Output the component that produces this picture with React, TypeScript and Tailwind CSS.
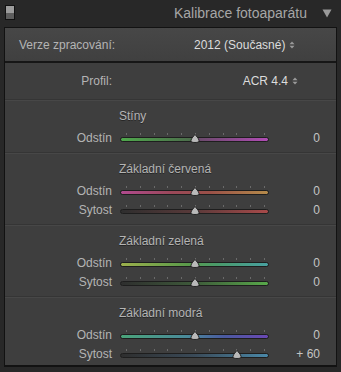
import React from "react";

type SliderProps = {
  label: string;
  value: number;
  gradient: string;
};

const ticks = [0, 1, 2, 3, 4, 5, 6, 7, 8, 9, 10];

const Thumb = () => (
  <svg width="10" height="9" viewBox="0 0 10 9" className="block">
    <path
      d="M5 0.5 C5.6 1.5 9 4.5 9 6.5 C9 8 8 8.5 5 8.5 C2 8.5 1 8 1 6.5 C1 4.5 4.4 1.5 5 0.5 Z"
      fill="#b9b9b9"
      stroke="#1c1c1c"
      strokeWidth="0.9"
    />
  </svg>
);

const SliderRow = ({ label, value, gradient }: SliderProps) => {
  const pct = (value + 100) / 200;
  const text = value > 0 ? `+ ${value}` : `${value}`;
  return (
    <div className="flex items-center h-[19px]">
      <span className="w-[107px] text-right text-[12px] text-[#b4b4b4]">{label}</span>
      <div className="relative ml-[8px] w-[149px] h-[12px]">
        {ticks.map((t) => (
          <span
            key={t}
            className="absolute top-[1px] w-px h-[2px] bg-[#6a6a6a]"
            style={{ left: 6 + t * 13.8 }}
          />
        ))}
        <div
          className="absolute left-0 right-0 top-[5px] h-[5px] rounded-full border border-[#1e1e1e]"
          style={{ background: gradient }}
        />
        <div className="absolute top-[2px]" style={{ left: 4 + pct * 141 - 5 }}>
          <Thumb />
        </div>
      </div>
      <span className="w-[51px] text-right text-[12px] text-[#c4c4c4]">{text}</span>
    </div>
  );
};

const Section = ({ title, children }: { title: string; children: React.ReactNode }) => (
  <div className="pt-[8px] pb-[5px] border-b border-[#353535] shadow-[0_1px_0_#474747]">
    <div className="h-[16px] leading-[16px] pl-[114px] text-[12px] text-[#b4b4b4] [text-shadow:0_1px_0_#262626]">
      {title}
    </div>
    <div className="mt-[4px]">{children}</div>
  </div>
);

const UpDown = () => (
  <svg width="6" height="8" viewBox="0 0 6 8" className="inline-block ml-[4px]">
    <path d="M3 0.5 L5.5 3.2 L0.5 3.2 Z" fill="#9a9a9a" />
    <path d="M3 7.5 L5.5 4.8 L0.5 4.8 Z" fill="#9a9a9a" />
  </svg>
);

export default function App() {
  return (
    <div
      className="w-[341px] h-[372px] bg-[#282828] overflow-hidden"
      style={{ fontFamily: '"Liberation Sans", Arial, sans-serif' }}
    >
      <header className="relative h-[27px] flex items-center justify-end pr-[9px]">
        <div className="absolute left-[5px] top-[5px] w-[10px] h-[15px] border border-[#111] flex flex-col">
          <div className="flex-1 bg-[#9c9c9c]" />
          <div className="flex-1 bg-[#5e5e5e]" />
        </div>
        <span className="text-[14px] text-[#a6a6a6] mr-[15px]">Kalibrace fotoaparátu</span>
        <svg width="10" height="9" viewBox="0 0 10 9">
          <path d="M0.5 0.5 L9.5 0.5 L5 8.5 Z" fill="#9a9a9a" />
        </svg>
      </header>

      <div className="ml-[4px] w-[333px] h-[340px] border border-[#121212] border-b-2 bg-[#3e3e3e] flex flex-col">
        <div className="h-[35px] flex items-center bg-gradient-to-b from-[#474747] to-[#404040] border-b-2 border-[#161616] text-[12px]">
          <span className="pl-[14px] w-[189px] text-[#b4b4b4]">Verze zpracování:</span>
          <span className="text-[#dcdcdc] flex items-center">
            2012 (Současné)
            <UpDown />
          </span>
        </div>

        <div className="h-[37px] flex items-center border-b border-[#353535] shadow-[0_1px_0_#474747] text-[12px]">
          <span className="w-[107px] text-right text-[#b4b4b4]">Profil:</span>
          <span className="ml-auto mr-[38px] text-[#dcdcdc] flex items-center">
            ACR 4.4
            <UpDown />
          </span>
        </div>

        <Section title="Stíny">
          <SliderRow
            label="Odstín"
            value={0}
            gradient="linear-gradient(to right, #4fa84c, #4c6a4b 50%, #6a4a6a 52%, #b04cb4)"
          />
        </Section>

        <Section title="Základní červená">
          <SliderRow
            label="Odstín"
            value={0}
            gradient="linear-gradient(to right, #b04a8e, #9a4858 35%, #9a5048 60%, #b48a4a)"
          />
          <SliderRow
            label="Sytost"
            value={0}
            gradient="linear-gradient(to right, #2e2e2e, #5a3a3a 50%, #a84a4a)"
          />
        </Section>

        <Section title="Základní zelená">
          <SliderRow
            label="Odstín"
            value={0}
            gradient="linear-gradient(to right, #9cb04c, #5a9a4a 45%, #4a9a6a 65%, #48a0a0)"
          />
          <SliderRow
            label="Sytost"
            value={0}
            gradient="linear-gradient(to right, #2e2e2e, #3e5a3a 50%, #58a84a)"
          />
        </Section>

        <div className="pt-[8px]">
          <div className="h-[16px] leading-[16px] pl-[114px] text-[12px] text-[#b4b4b4] [text-shadow:0_1px_0_#262626]">
            Základní modrá
          </div>
          <div className="mt-[4px]">
            <SliderRow
              label="Odstín"
              value={0}
              gradient="linear-gradient(to right, #4aa47a, #4a8a9a 45%, #4a5aa0 70%, #6a48b4)"
            />
            <SliderRow
              label="Sytost"
              value={60}
              gradient="linear-gradient(to right, #2e2e2e, #3a4a58 50%, #4a88a8)"
            />
          </div>
        </div>
      </div>
    </div>
  );
}
